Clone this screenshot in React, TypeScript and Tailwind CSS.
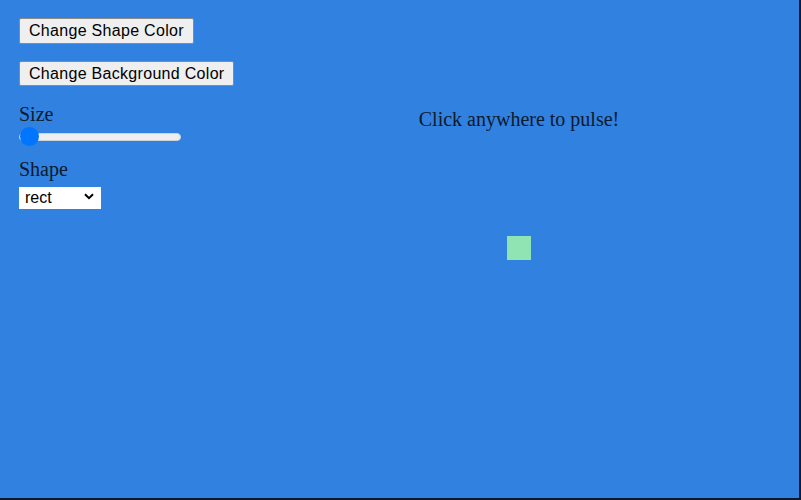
import React from "react";

export default function App() {
  return (
    <div className="w-[801px] h-[500px] bg-[#0b1a2d] overflow-hidden">
      <div className="w-[799px] h-[498px] bg-[#3181e0] flex text-[#0b1a2d]">
        <div className="w-[239px] shrink-0 pl-[19px] pt-[18px] flex flex-col items-start">
          <button className="h-[26px] px-[9px] bg-[#efefef] border border-[#8a8a8a] rounded-[2px] text-[16px] leading-[20px] tracking-[0.3px] text-black font-['Liberation_Sans',Arial,sans-serif]">
            Change Shape Color
          </button>
          <button className="mt-[17px] h-[25px] px-[9px] bg-[#efefef] border border-[#8a8a8a] rounded-[2px] text-[16px] leading-[20px] tracking-[0.3px] text-black font-['Liberation_Sans',Arial,sans-serif]">
            Change Background Color
          </button>
          <div className="mt-[17px] text-[20px] leading-[23px] font-['Liberation_Serif','Times_New_Roman',serif]">
            Size
          </div>
          <input
            type="range"
            min={10}
            max={200}
            defaultValue={10}
            className="mt-[1px] w-[162px] h-[19px] appearance-none bg-transparent cursor-pointer [&::-webkit-slider-runnable-track]:h-[8px] [&::-webkit-slider-runnable-track]:rounded-full [&::-webkit-slider-runnable-track]:bg-[#efefef] [&::-webkit-slider-runnable-track]:border [&::-webkit-slider-runnable-track]:border-[#c9d3de] [&::-webkit-slider-thumb]:appearance-none [&::-webkit-slider-thumb]:w-[19px] [&::-webkit-slider-thumb]:h-[19px] [&::-webkit-slider-thumb]:rounded-full [&::-webkit-slider-thumb]:bg-[#0075ff] [&::-webkit-slider-thumb]:mt-[-6.5px]"
          />
          <div className="mt-[12px] text-[20px] leading-[23px] font-['Liberation_Serif','Times_New_Roman',serif]">
            Shape
          </div>
          <div className="relative mt-[4px] w-[82px] h-[22px]">
            <select
              defaultValue="rect"
              className="w-full h-full appearance-none bg-white text-black pl-[6px] text-[16px] leading-[20px] font-['Liberation_Sans',Arial,sans-serif]"
            >
              <option value="rect">rect</option>
              <option value="circle">circle</option>
            </select>
            <svg
              className="absolute right-[7px] top-[8px] pointer-events-none"
              width="10"
              height="7"
              viewBox="0 0 10 7"
            >
              <path d="M1 1.2 L5 5.2 L9 1.2" fill="none" stroke="#000" strokeWidth="2" />
            </svg>
          </div>
        </div>
        <div className="flex-1 flex flex-col items-center">
          <div className="mt-[108px] text-[20px] leading-[23px] font-['Liberation_Serif','Times_New_Roman',serif]">
            Click anywhere to pulse!
          </div>
          <div className="mt-[105px] w-[24px] h-[24px] bg-[#90e4b4]" />
        </div>
      </div>
    </div>
  );
}
